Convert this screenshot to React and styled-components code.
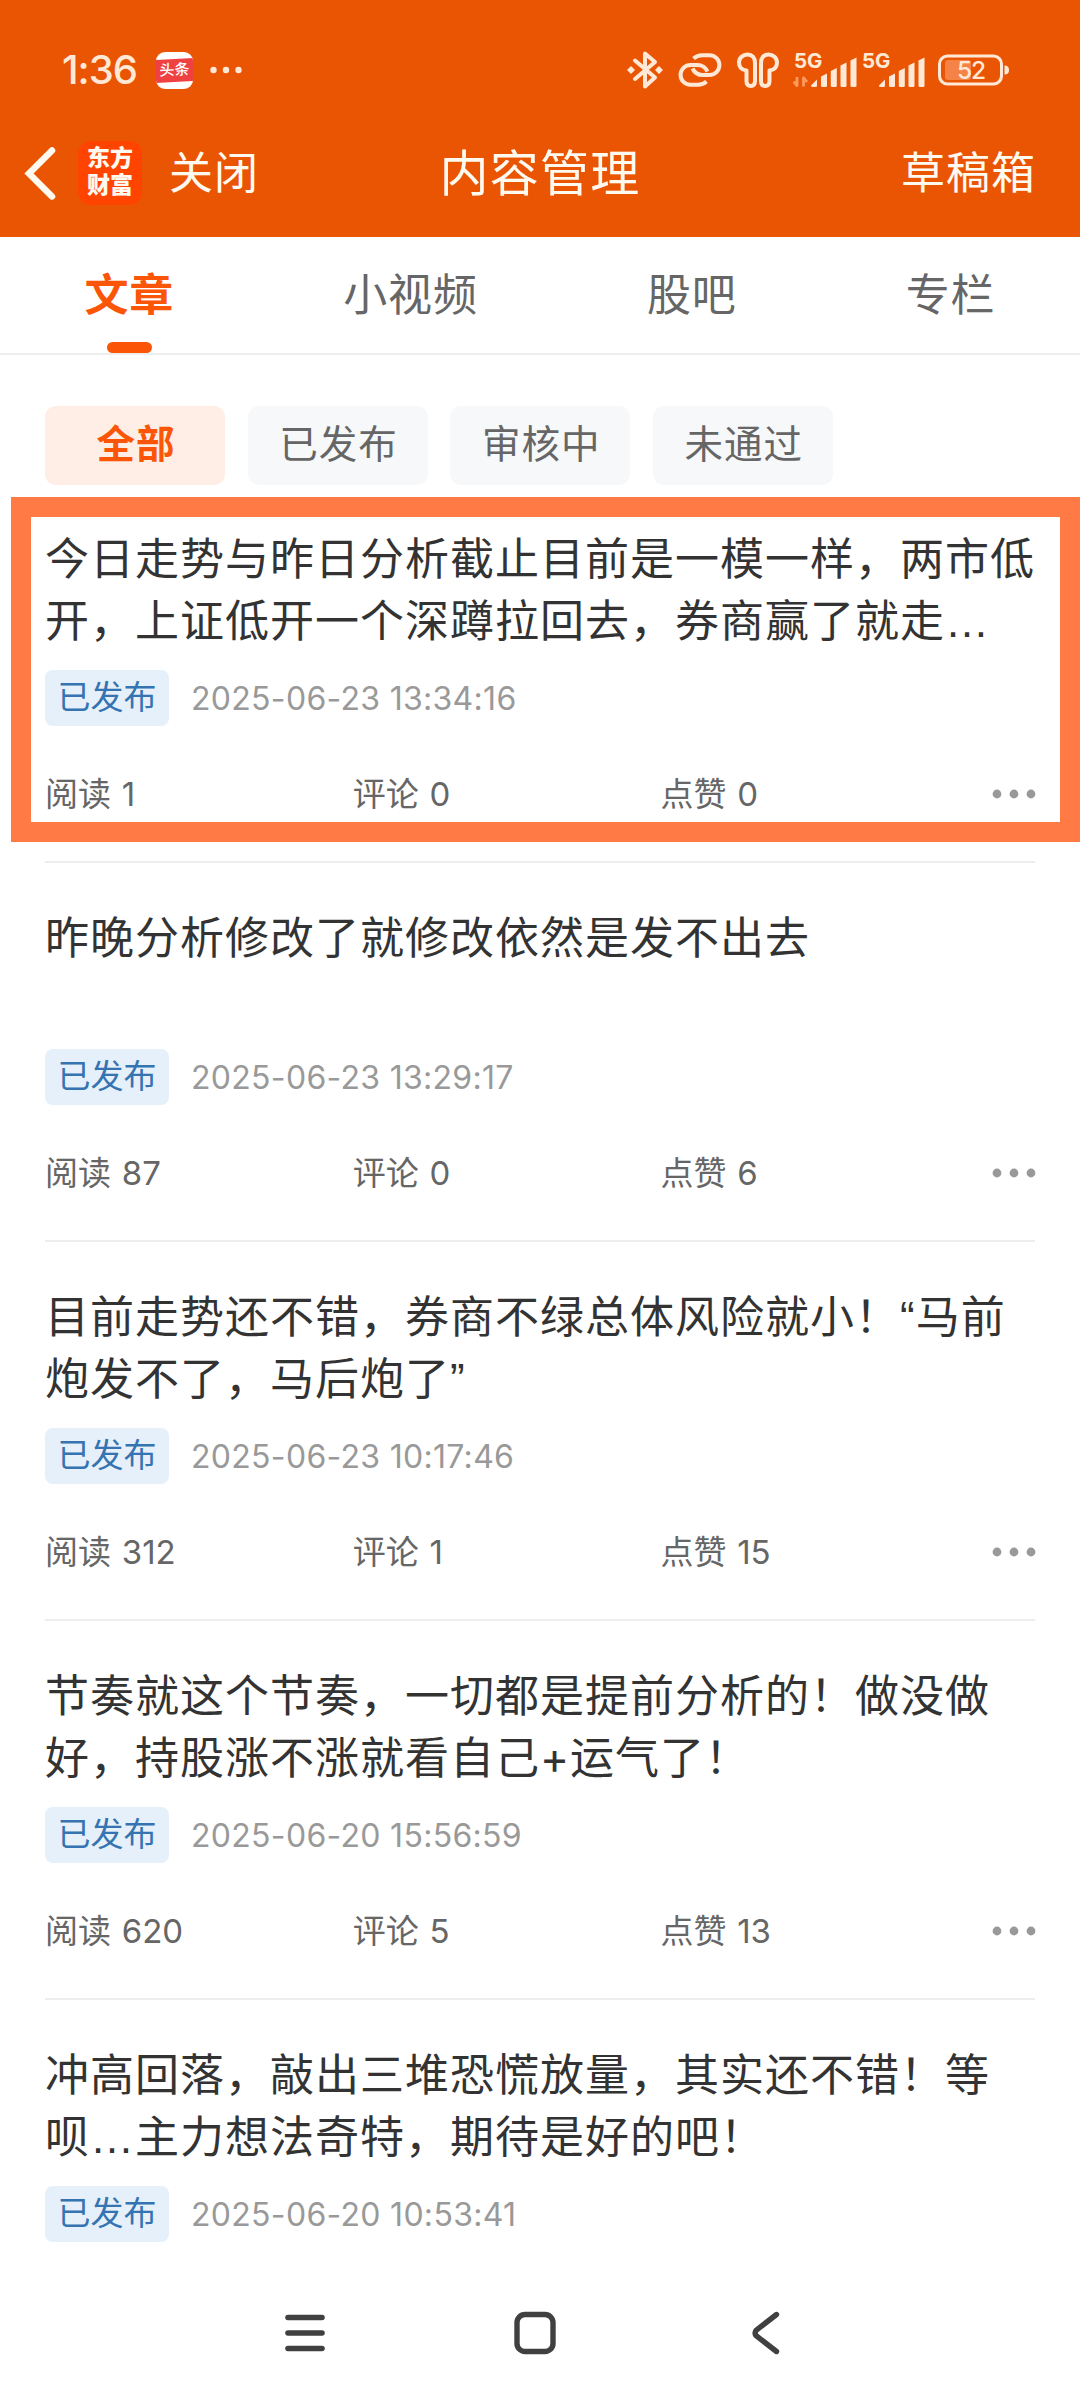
import React from 'react';
import styled, { createGlobalStyle, ThemeProvider } from 'styled-components'

const GlobalStyle = createGlobalStyle`
	* {
		box-sizing: border-box;
	}
	body {
		margin: 0;
		background: #fff;
		font-family: Inter, "Noto Sans CJK SC", sans-serif;
	}
`

const theme = {
	header: '#ea5504',
	headerText: '#fffaf0',
	statusText: '#ffe9d6',
	primary: '#fb5607',
	primaryLight: '#ffeee6',
	highlight: '#ff7a45',
	text: '#333',
	grey: '#666',
	lightGrey: '#999',
	line: '#eee',
	chip: '#f7f8fa',
	tag: '#e5f0fa',
	tagText: '#3573b1'
}

const Page = styled.div`
	display: flex;
	flex-direction: column;
	width: 1080px;
	height: 2400px;
	overflow: hidden;
	background: #fff;
`

const Header = styled.header`
	flex: none;
	height: 237px;
	background: ${props => props.theme.header};
`

const StatusBar = styled.div`
	display: flex;
	align-items: center;
	height: 140px;
	padding: 0 70px 0 62px;
	color: ${props => props.theme.statusText};

	svg {
		display: block;
		flex: none;
		overflow: visible;
	}
`

const Clock = styled.span`
	width: 94px;
	font-size: 40px;
	font-weight: 500;
	line-height: 40px;
	letter-spacing: -1px;
`

const NewsIcon = styled.div`
	display: flex;
	flex-direction: column;
	justify-content: center;
	width: 37px;
	height: 37px;
	margin-right: 17px;
	border-radius: 9px;
	background: #fff;
	overflow: hidden;
`

const NewsLabel = styled.div`
	height: 23px;
	background: #f04142;
	color: #fff;
	font-size: 15px;
	font-weight: 500;
	line-height: 22px;
	text-align: center;
	transform: skewY(-3deg);
`

const StatusIcons = styled.div`
	display: flex;
	align-items: center;
	margin-left: auto;
`

const Gap = styled.i`
	width: ${props => props.$size}px;
`

const TitleBar = styled.div`
	display: grid;
	grid-template-columns: 1fr auto 1fr;
	align-items: center;
	height: 66px;
	padding: 0 44px 0 22px;
	color: ${props => props.theme.headerText};
`

const TitleLeft = styled.div`
	display: flex;
	align-items: center;
	margin-right: -22px;
`

const Logo = styled.div`
	width: 64px;
	height: 64px;
	margin: 0 27px 0 18px;
	padding-top: 4px;
	border-radius: 13px;
	background: #ff4400;
	font-size: 23px;
	font-weight: 900;
	line-height: 27px;
	text-align: center;
`

const BarText = styled.span`
	font-size: 44px;
	line-height: 60px;
	letter-spacing: 1px;
	justify-self: ${props => props.$end ? 'end' : 'auto'};
`

const Title = styled.h1`
	margin: 0;
	padding: 2px 0 0 22px;
	font-size: 49px;
	font-weight: 400;
	line-height: 64px;
	letter-spacing: 1.2px;
`

const Tabs = styled.nav`
	display: flex;
	flex: none;
	justify-content: space-around;
	height: 118px;
	border-bottom: 2px solid ${props => props.theme.line};
`

const Tab = styled.div`
	display: flex;
	flex-direction: column;
	align-items: center;
	justify-content: space-between;
	padding-top: 26px;
	color: ${props => props.$active ? props.theme.primary : props.theme.grey};
	font-size: 44px;
	font-weight: ${props => props.$active ? 700 : 400};
	line-height: 64px;
	letter-spacing: 1px;

	&::after {
		content: '';
		display: ${props => props.$active ? 'block' : 'none'};
		width: 45px;
		height: 11px;
		border-radius: 6px;
		background: ${props => props.theme.primary};
	}
`

const Filters = styled.div`
	display: flex;
	flex: none;
	gap: 22.6px;
	padding: 51px 45px 0;
`

const Chip = styled.div`
	width: 180px;
	height: 79px;
	padding-left: 2px;
	border-radius: 11px;
	background: ${props => props.$active ? props.theme.primaryLight : props.theme.chip};
	color: ${props => props.$active ? props.theme.primary : props.theme.grey};
	font-size: 38.5px;
	font-weight: ${props => props.$active ? 700 : 400};
	line-height: 76px;
	letter-spacing: 1px;
	text-align: center;
`

const List = styled.main`
	flex: 1;
	min-height: 0;
	margin-top: -1px;
	overflow: hidden;
	padding: 0 45px;
`

const Article = styled.article`
	position: relative;
	height: 379px;
	padding-top: 45px;
	border-bottom: 2px solid ${props => props.theme.line};
`

/* hand-drawn marker frame lying over the article */
const Marker = styled.div`
	position: absolute;
	top: 13px;
	right: -45px;
	left: -34px;
	height: 345px;
	border: 20.5px solid ${props => props.theme.highlight};
`

const ArticleTitle = styled.h2`
	height: 123px;
	margin: 0;
	color: ${props => props.theme.text};
	font-size: 44px;
	font-weight: 400;
	line-height: 61.5px;
	letter-spacing: 1px;
	white-space: pre;
`

/* full-width ellipsis on the baseline, narrow curly quotes */
const Punctuation = styled.span`
	font-family: "Liberation Sans", sans-serif;
	line-height: 59px;
`

const Meta = styled.div`
	display: flex;
	align-items: center;
	gap: 22px;
	height: 56px;
	margin-top: 18px;
`

const Tag = styled.span`
	width: 124px;
	height: 56px;
	border-radius: 8px;
	background: ${props => props.theme.tag};
	color: ${props => props.theme.tagText};
	font-size: 33px;
	line-height: 55px;
	text-align: center;
`

const Time = styled.time`
	padding-top: 2px;
	color: ${props => props.theme.lightGrey};
	font-size: 32px;
	line-height: 56px;
	letter-spacing: .3px;
`

const Stats = styled.div`
	display: grid;
	grid-template-columns: 307.7px 307.7px 1fr auto;
	align-items: center;
	height: 50px;
	margin-top: 43px;
	color: ${props => props.theme.grey};
	font-size: 33px;
	line-height: 50px;
	word-spacing: 1.5px;

	svg {
		display: block;
		margin-right: -1px;
		color: ${props => props.theme.lightGrey};
	}
`

const SystemNav = styled.footer`
	display: flex;
	flex: none;
	justify-content: center;
	align-items: center;
	gap: 186px;
	height: 134px;
	padding-right: 11px;
	background: #fff;
`

const tabs = ['文章', '小视频', '股吧', '专栏']
const filters = ['全部', '已发布', '审核中', '未通过']

const articles = [
	{ title: '今日走势与昨日分析截止目前是一模一样，两市低\n开，上证低开一个深蹲拉回去，券商赢了就走…', time: '2025-06-23 13:34:16', stats: [1, 0, 0], marked: true },
	{ title: '昨晚分析修改了就修改依然是发不出去', time: '2025-06-23 13:29:17', stats: [87, 0, 6] },
	{ title: '目前走势还不错，券商不绿总体风险就小！“马前\n炮发不了，马后炮了”', time: '2025-06-23 10:17:46', stats: [312, 1, 15] },
	{ title: '节奏就这个节奏，一切都是提前分析的！做没做\n好，持股涨不涨就看自己+运气了！', time: '2025-06-20 15:56:59', stats: [620, 5, 13] },
	{ title: '冲高回落，敲出三堆恐慌放量，其实还不错！等\n呗…主力想法奇特，期待是好的吧！', time: '2025-06-20 10:53:41' }
]

function Dots({ width, gap, r }) {
	return <svg width={width} height="12" fill="currentColor">
		{[-1, 0, 1].map(n => <circle key={n} cx={width / 2 + n * gap} cy="6" r={r} />)}
	</svg>
}

function Bluetooth() {
	return <svg width="36" height="40" viewBox="0 0 36 40" fill="none" stroke="currentColor" strokeWidth="4" strokeLinejoin="round" strokeLinecap="round">
		<path d="M8 10.5 28 27.5 18 36.5V3.500L28 12 8 29" />
		<path d="M4 16 8 20 4 24 0 20ZM32 16 36 20 32 24 28 20Z" fill="currentColor" stroke="none" />
	</svg>
}

function LinkIcon() {
	return <svg width="44" height="34" viewBox="0 0 44 34" fill="none" stroke="currentColor" strokeWidth="4">
		<path d="M15.500 5.500C18 3.200 20.500 2.200 24 2.200H31.500A9.900 9.900 0 0 1 31.500 22H24.500C19.500 22 16.500 19.500 14.500 15.500" />
		<path d="M28.500 28.500C26 30.800 23.500 31.800 20 31.800H12.500A9.900 9.900 0 0 1 12.500 12H19.500C24.500 12 27.500 14.500 29.500 18.500" />
	</svg>
}

function Earbuds() {
	return <svg width="42" height="37" viewBox="0 0 42 37" fill="none" stroke="currentColor" strokeWidth="4" strokeLinejoin="round">
		<path d="M18 11C18 5.500 15 2.500 10.500 2.500S2 6 2 10.500C2 15.500 5 18 9.500 18.500V29C9.500 32.500 11 34 13.800 34S18 32.500 18 29Z" />
		<path d="M24 11C24 5.500 27 2.500 31.500 2.500S40 6 40 10.500C40 15.500 37 18 32.500 18.500V29C32.500 32.500 31 34 28.200 34S24 32.500 24 29Z" />
	</svg>
}

function Signal({ data }) {
	return <svg width="64" height="36" viewBox="0 0 64 36" fill="currentColor">
		<text x="1" y="15.5" fontSize="20.5" fontWeight="700">5G</text>
		{data && <path d="M4 25v9.500M4.500 34.500 .8 29.500M10.500 34.500v-9.500M10 25l4 5" fill="none" stroke="#ff9a5e" strokeWidth="2.800" />}
		<path d="M18 33.500 24 27.500V33.500Q24 35 22.500 35H19.500Q18 35 18 33.500Z" />
		<path d="M28 24.500 34 21.500V33.500Q34 35 32.500 35H29.500Q28 35 28 33.500Z" />
		<path d="M37.800 19 43.800 16V33.500Q43.800 35 42.300 35H39.300Q37.800 35 37.800 33.500Z" />
		<path d="M47.500 13.500 53.500 10.500V33.500Q53.500 35 52 35H49Q47.500 35 47.500 33.500Z" />
		<path d="M57.500 8.500 63.500 5.500V33.500Q63.500 35 62 35H59Q57.500 35 57.500 33.500Z" />
	</svg>
}

function Battery() {
	return <svg width="72" height="32" viewBox="0 0 72 32">
		<rect x="1.500" y="2" width="62" height="28" rx="8" fill="none" stroke="currentColor" strokeWidth="3" />
		<rect x="7" y="6" width="26" height="20" rx="3" fill="#f58246" />
		<path d="M66.500 11.500Q71 11.500 71 16T66.500 20.500Z" fill="currentColor" />
		<text x="33" y="24.500" fontSize="24.500" fontWeight="500" textAnchor="middle" fill="currentColor" letterSpacing="-1">52</text>
	</svg>
}

function PhoneStatus() {
	return <StatusBar>
		<Clock>1:36</Clock>
		<NewsIcon><NewsLabel>头条</NewsLabel></NewsIcon>
		<Dots width={32} gap={12.5} r={3.2} />
		<StatusIcons>
			<Bluetooth />
			<Gap $size={15} /><LinkIcon />
			<Gap $size={15} /><Earbuds />
			<Gap $size={14} /><Signal data />
			<Gap $size={4} /><Signal />
			<Gap $size={13} /><Battery />
		</StatusIcons>
	</StatusBar>
}

function ArticleItem({ article: { title, time, stats, marked } }) {
	return <Article>
		{marked && <Marker />}
		<ArticleTitle>
			{title.split(/([…“”])/).map((part, index) => index % 2 ? <Punctuation key={index}>{part}</Punctuation> : part)}
		</ArticleTitle>
		<Meta>
			<Tag>已发布</Tag>
			<Time>{time}</Time>
		</Meta>
		{stats && <Stats>
			<span>阅读 {stats[0]}</span>
			<span>评论 {stats[1]}</span>
			<span>点赞 {stats[2]}</span>
			<Dots width={44} gap={17} r={4.4} />
		</Stats>}
	</Article>
}

function App() {
	return (
		<ThemeProvider theme={theme}>
			<GlobalStyle />
			<Page>
				<Header>
					<PhoneStatus />
					<TitleBar>
						<TitleLeft>
							<svg width="38" height="56" viewBox="0 0 38 56" fill="none" stroke="currentColor" strokeWidth="6.5" strokeLinecap="round">
								<path d="M30 5.500 7 28.500 30 51.500" />
							</svg>
							<Logo>东方<br />财富</Logo>
							<BarText>关闭</BarText>
						</TitleLeft>
						<Title>内容管理</Title>
						<BarText $end>草稿箱</BarText>
					</TitleBar>
				</Header>

				<Tabs>
					{tabs.map((tab, index) => <Tab key={tab} $active={index === 0}>{tab}</Tab>)}
				</Tabs>
				<Filters>
					{filters.map((filter, index) => <Chip key={filter} $active={index === 0}>{filter}</Chip>)}
				</Filters>

				<List>
					{articles.map(article => <ArticleItem key={article.time} article={article} />)}
				</List>

				<SystemNav>
					<svg width="44" height="44" viewBox="0 0 44 44" stroke="#404040" strokeWidth="5.600" strokeLinecap="round">
						<path d="M5 6.500H39M5 22H39M5 37.500H39" />
					</svg>
					<svg width="44" height="44" viewBox="0 0 44 44" fill="none" stroke="#404040" strokeWidth="5.400">
						<rect x="4" y="3.500" width="36" height="37" rx="8" />
					</svg>
					<svg width="44" height="44" viewBox="0 0 44 44" fill="none" stroke="#404040" strokeWidth="5.400" strokeLinecap="round">
						<path d="M33.500 3.500 13.500 19Q10.500 22 13.500 25L33.500 40.500" />
					</svg>
				</SystemNav>
			</Page>
		</ThemeProvider>
	);
}

export default App;
